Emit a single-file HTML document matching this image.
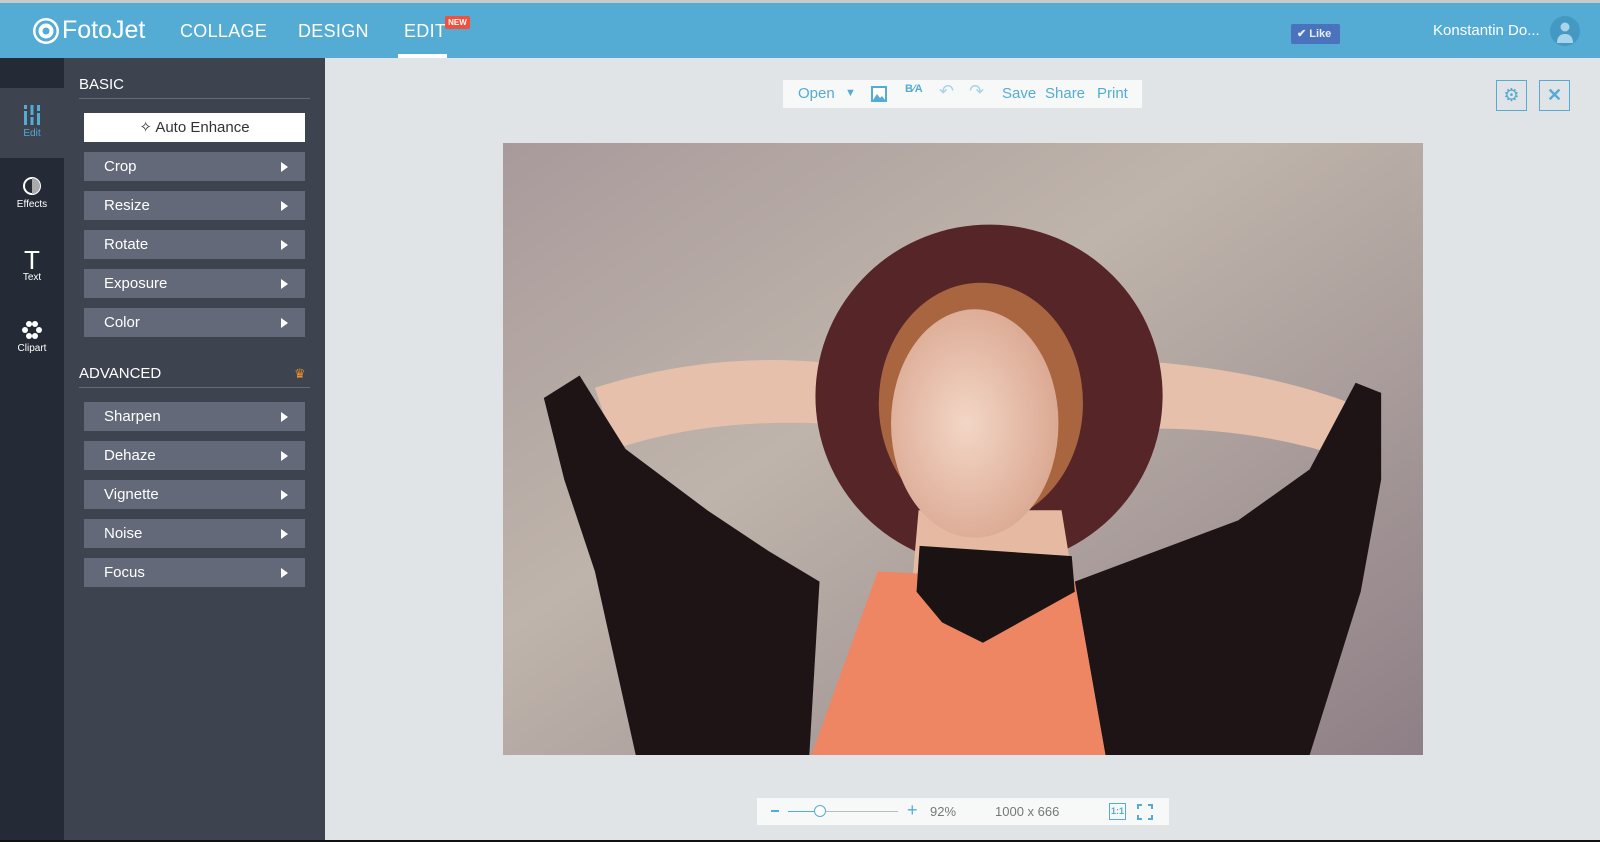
<!DOCTYPE html>
<html><head><meta charset="utf-8"><style>
*{margin:0;padding:0;box-sizing:border-box}
body{width:1600px;height:842px;overflow:hidden;background:#e1e4e7;font-family:"Liberation Sans",sans-serif;position:relative}
.top{position:absolute;left:0;top:0;width:1600px;height:3px;background:#c9c9c9}
.hdr{position:absolute;left:0;top:3px;width:1600px;height:55px;background:#54abd3;color:#fff}
.nav{position:absolute;top:18px;font-size:18px;color:#fff;letter-spacing:.3px}
.side{position:absolute;left:0;top:58px;width:64px;height:784px;background:#252b36}
.panel{position:absolute;left:64px;top:58px;width:261px;height:784px;background:#3e4350}
.si{position:absolute;left:0;width:64px;text-align:center;color:#fff;font-size:10px}
.h{position:absolute;left:15px;color:#fff;font-size:15px}
.ln{position:absolute;left:15px;width:231px;height:1px;background:#646a76}
.btn{position:absolute;left:20px;width:221px;height:29px;background:#636978;color:#fff;font-size:15px;line-height:29px;padding-left:20px}
.btn:after{content:"";position:absolute;right:17px;top:10px;border-left:7px solid #fff;border-top:5px solid transparent;border-bottom:5px solid transparent}
.tb{position:absolute;left:783px;top:80px;width:359px;height:28px;background:#f7f9f9;color:#54abd3;font-size:15px}
.tb span{position:absolute;top:5px}
.sq{position:absolute;top:80px;width:31px;height:31px;border:1px solid #54abd3}
.bb{position:absolute;left:757px;top:798px;width:412px;height:27px;background:#f7f9f9;color:#777;font-size:13px}
</style></head><body>
<div class="top"></div>
<div class="hdr">
 <svg style="position:absolute;left:32px;top:14px" width="28" height="28" viewBox="0 0 28 28"><circle cx="14" cy="14" r="13" fill="#fff"/><circle cx="14" cy="14" r="9" fill="none" stroke="#54abd3" stroke-width="3"/><circle cx="14" cy="14" r="3.5" fill="#54abd3"/></svg>
 <div style="position:absolute;left:62px;top:13px;font-size:25px;color:#fff">FotoJet</div>
 <div class="nav" style="left:180px">COLLAGE</div>
 <div class="nav" style="left:298px">DESIGN</div>
 <div class="nav" style="left:404px">EDIT</div>
 <div style="position:absolute;left:445px;top:13px;width:25px;height:13px;background:#f0503c;border-radius:2px;font-size:8px;color:#fff;text-align:center;line-height:13px;font-weight:bold">NEW</div>
 <div style="position:absolute;left:398px;top:51px;width:49px;height:4px;background:#fff"></div>
 <div style="position:absolute;left:1291px;top:21px;width:49px;height:20px;background:#4a72bd;border-radius:2px;font-size:11px;font-weight:bold;color:#e8eefa;line-height:20px;padding-left:6px">✔ Like</div>
 <div style="position:absolute;left:1433px;top:19px;font-size:15px">Konstantin Do...</div>
 <svg style="position:absolute;left:1550px;top:13px" width="30" height="30" viewBox="0 0 30 30"><circle cx="15" cy="15" r="15" fill="#4399c2"/><circle cx="15" cy="11" r="4.5" fill="#a8d5ea"/><path d="M7 27c0-7 4-9 8-9s8 2 8 9z" fill="#a8d5ea"/></svg>
</div>
<div class="side">
 <div style="position:absolute;left:0;top:30px;width:64px;height:70px;background:#3e4350"></div>
 <div class="si" style="top:47px;color:#54abd3"><svg width="18" height="20" viewBox="0 0 18 20"><g fill="#54abd3"><rect x="1" y="0" width="3" height="20"/><rect x="7.5" y="0" width="3" height="20"/><rect x="14" y="0" width="3" height="20"/></g><g fill="#3e4350"><rect x="0" y="4" width="5" height="2"/><rect x="6.5" y="10" width="5" height="2"/><rect x="13" y="6" width="5" height="2"/></g></svg><div style="margin-top:0">Edit</div></div>
 <div class="si" style="top:118px"><svg width="20" height="20"><circle cx="10" cy="10" r="8" fill="none" stroke="#fff" stroke-width="2"/><path d="M10 2a8 8 0 0 1 0 16z" fill="#aaa"/></svg><div>Effects</div></div>
 <div class="si" style="top:190px"><div style="font-size:26px;line-height:24px;font-weight:300">T</div><div>Text</div></div>
 <div class="si" style="top:262px"><svg width="22" height="20" fill="#fff"><circle cx="8" cy="4" r="3"/><circle cx="14" cy="4" r="3"/><circle cx="4" cy="10" r="3"/><circle cx="18" cy="10" r="3"/><circle cx="8" cy="16" r="3"/><circle cx="14" cy="16" r="3"/></svg><div>Clipart</div></div>
</div>
<div class="panel">
 <div class="h" style="top:18px">BASIC</div>
 <div class="ln" style="top:40px"></div>
 <div style="position:absolute;left:20px;top:55px;width:221px;height:29px;background:#fff;color:#333;font-size:15px;line-height:29px;text-align:center">✧ Auto Enhance</div>
 <div class="btn" style="top:94px">Crop</div>
 <div class="btn" style="top:133px">Resize</div>
 <div class="btn" style="top:172px">Rotate</div>
 <div class="btn" style="top:211px">Exposure</div>
 <div class="btn" style="top:250px">Color</div>
 <div class="h" style="top:307px">ADVANCED</div>
 <div style="position:absolute;left:230px;top:308px;color:#f0902a;font-size:13px">♛</div>
 <div class="ln" style="top:329px"></div>
 <div class="btn" style="top:344px">Sharpen</div>
 <div class="btn" style="top:383px">Dehaze</div>
 <div class="btn" style="top:422px">Vignette</div>
 <div class="btn" style="top:461px">Noise</div>
 <div class="btn" style="top:500px">Focus</div>
</div>
<div class="tb">
 <span style="left:15px">Open</span><span style="left:62px;font-size:11px;top:7px">▼</span>
 <svg style="position:absolute;left:88px;top:6px" width="16" height="16"><rect width="16" height="16" fill="#54abd3"/><rect x="2" y="2" width="12" height="12" fill="#fff"/><path d="M2 14l4-6 3 4 2-2 3 4z" fill="#54abd3"/></svg>
 <span style="left:122px;font-size:11px;top:3px;font-weight:bold">B⁄A</span>
 <span style="left:156px;color:#a9d3e8;font-size:18px;top:1px">↶</span>
 <span style="left:186px;color:#a9d3e8;font-size:18px;top:1px">↷</span>
 <span style="left:219px">Save</span><span style="left:262px">Share</span><span style="left:314px">Print</span>
</div>
<div class="sq" style="left:1496px"><div style="color:#54abd3;font-size:18px;text-align:center;line-height:29px">⚙</div></div>
<div class="sq" style="left:1539px"><div style="color:#54abd3;font-size:18px;font-weight:bold;text-align:center;line-height:29px">✕</div></div>
<svg style="position:absolute;left:503px;top:143px" width="920" height="612" viewBox="0 0 901 600" preserveAspectRatio="none">
 <defs><linearGradient id="bg" x1="0" y1="0" x2="1" y2="1"><stop offset="0" stop-color="#a89a9b"/><stop offset=".4" stop-color="#bfb4ab"/><stop offset="1" stop-color="#8e7f86"/></linearGradient>
 <radialGradient id="sk" cx=".45" cy=".5" r=".6"><stop offset="0" stop-color="#f3d6c6"/><stop offset="1" stop-color="#d9a58e"/></radialGradient></defs>
 <rect width="901" height="600" fill="url(#bg)"/>
 <path d="M90 240 Q200 205 312 215 L312 275 Q200 270 110 300Z" fill="#e6c0ab"/>
 <path d="M640 215 Q750 225 830 255 L830 310 Q740 280 640 280Z" fill="#e6c0ab"/>
 <ellipse cx="476" cy="248" rx="170" ry="168" transform="rotate(-5 476 248)" fill="#552528"/>
 <ellipse cx="468" cy="255" rx="100" ry="118" fill="#a8653f"/>
 <path d="M407 360 L547 360 L560 440 L400 440Z" fill="#e5b9a2"/>
 <ellipse cx="462" cy="275" rx="82" ry="112" fill="url(#sk)"/>
 <path d="M40 250 L75 228 L120 300 L200 360 L260 400 L310 430 L300 600 L130 600 L90 420 L60 330Z" fill="#1e1416"/>
 <path d="M860 245 L835 235 L790 320 L720 370 L640 400 L560 430 L590 600 L790 600 L840 440 L860 330Z" fill="#1e1416"/>
 <path d="M367 420 L560 430 L590 600 L302 600Z" fill="#ef8663"/>
 <path d="M408 395 L557 405 L560 440 L470 490 L430 470 L405 440Z" fill="#1a1213"/>
</svg>
<div class="bb">
 <div style="position:absolute;left:14px;top:12px;width:8px;height:2px;background:#54abd3"></div>
 <div style="position:absolute;left:31px;top:13px;width:27px;height:1px;background:#54abd3"></div>
 <div style="position:absolute;left:58px;top:13px;width:83px;height:1px;background:#bbb"></div>
 <div style="position:absolute;left:57px;top:7px;width:12px;height:12px;border:1px solid #54abd3;border-radius:50%;background:#fff"></div>
 <div style="position:absolute;left:150px;top:2px;color:#54abd3;font-size:18px">+</div>
 <div style="position:absolute;left:173px;top:6px">92%</div>
 <div style="position:absolute;left:238px;top:6px">1000 x 666</div>
 <div style="position:absolute;left:352px;top:5px;width:17px;height:17px;border:1px solid #54abd3;color:#54abd3;font-size:9px;font-weight:bold;text-align:center;line-height:15px">1:1</div>
 <svg style="position:absolute;left:380px;top:6px" width="16" height="16" fill="none" stroke="#54abd3" stroke-width="2"><path d="M1 5V1h4M11 1h4v4M15 11v4h-4M5 15H1v-4"/></svg>
</div>
<div style="position:absolute;left:0;top:840px;width:1600px;height:2px;background:#111"></div>
</body></html>
